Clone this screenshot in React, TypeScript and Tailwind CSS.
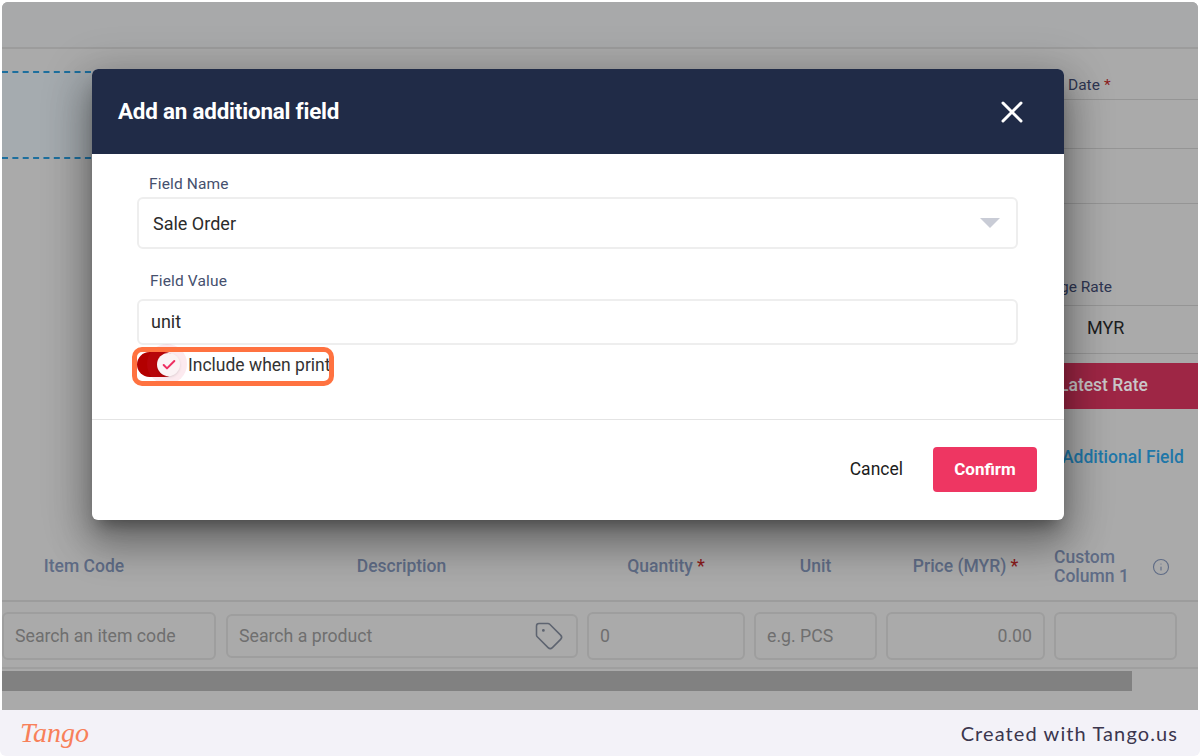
import React from 'react';
import { X, Check, Tag, Info } from 'lucide-react';

const columns = 'grid grid-cols-[214px_353px_158px_123px_159px_123px] gap-x-[9px]';
const cell = 'flex h-12 items-center rounded-md border-2 border-[#9e9e9e] px-[11px] text-[17.7px] text-[#6f6f6f]';

const Star = () => <span className="ml-1 text-[#8a1c1c]">*</span>;

const TableArea = () => (
  <div className="text-[17.5px] font-medium text-[#5f6c86]">
    <div className={`${columns} h-[63px] items-center border-b-2 border-[#9c9c9c] pb-[6px] text-center`}>
      <div className="pr-[50px]">Item Code</div>
      <div>Description</div>
      <div>Quantity<Star /></div>
      <div>Unit</div>
      <div>Price (MYR)<Star /></div>
      <div className="flex items-center justify-between text-left leading-[19px]">
        <span>Custom<br />Column 1</span>
        <Info className="mr-[7px] h-[18px] w-[18px] stroke-[1.5]" />
      </div>
    </div>
    <div className={`${columns} h-[67px] items-start border-b-2 border-[#9f9f9f] pt-[10px] font-normal`}>
      <div className={cell}>Search an item code</div>
      <div className={`${cell} ml-px mt-[2px] h-[44px] justify-between`}>
        <span>Search a product</span>
        <Tag className="mb-px mr-px h-[30px] w-[30px] stroke-[1.25] text-[#5e6470]" />
      </div>
      <div className={cell}>0</div>
      <div className={cell}>e.g. PCS</div>
      <div className={`${cell} justify-end`}>0.00</div>
      <div className={cell} />
    </div>
    <div className="mt-[2px] h-5 w-[1130px] bg-[#818181]" />
  </div>
);

const PageBehind = () => (
  <div className="flex h-[708px] flex-col bg-[#aaaaaa] font-['Roboto',sans-serif]">
    <div className="h-[47px] shrink-0 border-b-2 border-[#9c9c9c] bg-[#a8a9aa]" />
    <div className="flex h-[490px] shrink-0 justify-between">
      <div className="mt-[22px] h-[88px] w-[120px] border-y-2 border-dashed border-[#1d6f9e] bg-[#a5abaf]" />
      <div className="w-[140px] text-[#2f3652]">
        <div className="flex h-[51px] items-end border-b border-[#959595] pb-[2px] pl-2.5 text-[15.5px]">
          Date<Star />
        </div>
        <div className="h-[49px] border-b border-[#959595]" />
        <div className="h-[55px] border-b border-[#959595]" />
        <div className="flex h-[102px] items-end border-b border-[#959595] pb-[6px] pl-0.5 text-[15.5px]">
          ge Rate
        </div>
        <div className="flex h-12 items-center border-b border-[#959595] pb-1 pl-[29px] text-[18px] text-[#1e1e1e]">MYR</div>
        <div className="mt-[9px] flex h-[46px] items-center bg-[#9e2645] pb-0.5 pl-px text-[17.5px] font-medium text-[#c9c6c8]">
          Latest Rate
        </div>
        <div className="mt-[35px] pl-1 text-[17.5px] font-medium text-[#1f77a8]">Additional Field</div>
      </div>
    </div>
    <TableArea />
  </div>
);

const FieldLabel = ({ children, className }: { children: React.ReactNode; className: string }) => (
  <div className={`h-[18px] text-[15.5px] leading-[18px] tracking-[0.15px] text-[#45506e] ${className}`}>{children}</div>
);

const Modal = () => (
  <div className="absolute left-[92px] top-[69px] w-[972px] overflow-hidden rounded-md bg-white font-['Roboto',sans-serif] shadow-[0_11px_15px_-7px_rgba(0,0,0,0.35),0_24px_38px_3px_rgba(0,0,0,0.25),0_9px_46px_8px_rgba(0,0,0,0.2)]">
    <div className="flex h-[85px] items-center justify-between bg-[#202b47] pl-[26px] pr-[34px] text-white">
      <h2 className="text-[22.4px] font-bold tracking-[-0.2px]">Add an additional field</h2>
      <X className="h-9 w-9 stroke-2" />
    </div>
    <div className="h-[266px] border-b border-[#e4e4e4] pl-[45px] pr-[46px] pt-[21px]">
      <FieldLabel className="pl-3">Field Name</FieldLabel>
      <div className="mt-1 flex h-[52px] items-center justify-between rounded-md border-2 border-[#eeeeee] pl-3.5 pr-4 text-[18px] text-[#2b2b2b]">
        <span>Sale Order</span>
        <span className="h-0 w-0 border-x-[10px] border-t-[10px] border-x-transparent border-t-[#c9ccd6]" />
      </div>
      <FieldLabel className="mt-[23px] pl-[13px]">Field Value</FieldLabel>
      <div className="mt-[9px] flex h-[46px] items-center rounded-md border-2 border-[#eeeeee] pb-px pl-3 text-[18px] text-[#2b2b2b]">
        unit
      </div>
      <div className="mt-[7px] flex h-[25px] items-center">
        <div className="relative h-[25px] w-10 rounded-full bg-[#b30000]">
          <div className="absolute left-[10px] top-[-8px] h-10 w-10 rounded-full bg-[#e0305f]/10" />
          <div className="absolute left-[20px] top-px flex h-[23px] w-[23px] items-center justify-center rounded-full bg-[#fbf3f5] shadow">
            <Check className="h-4 w-4 stroke-[3] text-[#ee2f62]" />
          </div>
        </div>
        <div className="ml-[11px] w-[141px] overflow-hidden whitespace-nowrap pt-px text-[17.5px] text-[#333333]">
          Include when print
        </div>
      </div>
    </div>
    <div className="flex h-[100px] items-start justify-end pr-[27px] pt-[27px]">
      <button className="mr-[30px] flex h-[45px] items-center text-[17.5px] text-[#1c1c1c]">Cancel</button>
      <button className="h-[45px] w-[104px] rounded bg-[#ee3662] text-[17px] font-bold text-white">Confirm</button>
    </div>
  </div>
);

export default function App() {
  return (
    <div className="relative h-[756px] w-[1200px] overflow-hidden bg-white">
      <div className="px-[2px] pt-[2px]">
        <div className="overflow-hidden rounded-t-md">
          <PageBehind />
        </div>
      </div>
      <div className="flex h-[46px] items-center justify-between rounded-b-md bg-[#f3f2f8] pl-5 pr-[22px]">
        <span className="font-['Liberation_Serif',serif] text-[28px] font-normal italic leading-none text-[#f8805a]">Tango</span>
        <span className="font-['Lato',sans-serif] text-[20px] tracking-[1.1px] text-[#3b364e]">Created with Tango.us</span>
      </div>
      <Modal />
      {/* orange highlight from the step capture */}
      <div className="absolute left-[132px] top-[347px] h-[39px] w-[202px] rounded-[10px] border-[5px] border-[#ff7240]" />
    </div>
  );
}
